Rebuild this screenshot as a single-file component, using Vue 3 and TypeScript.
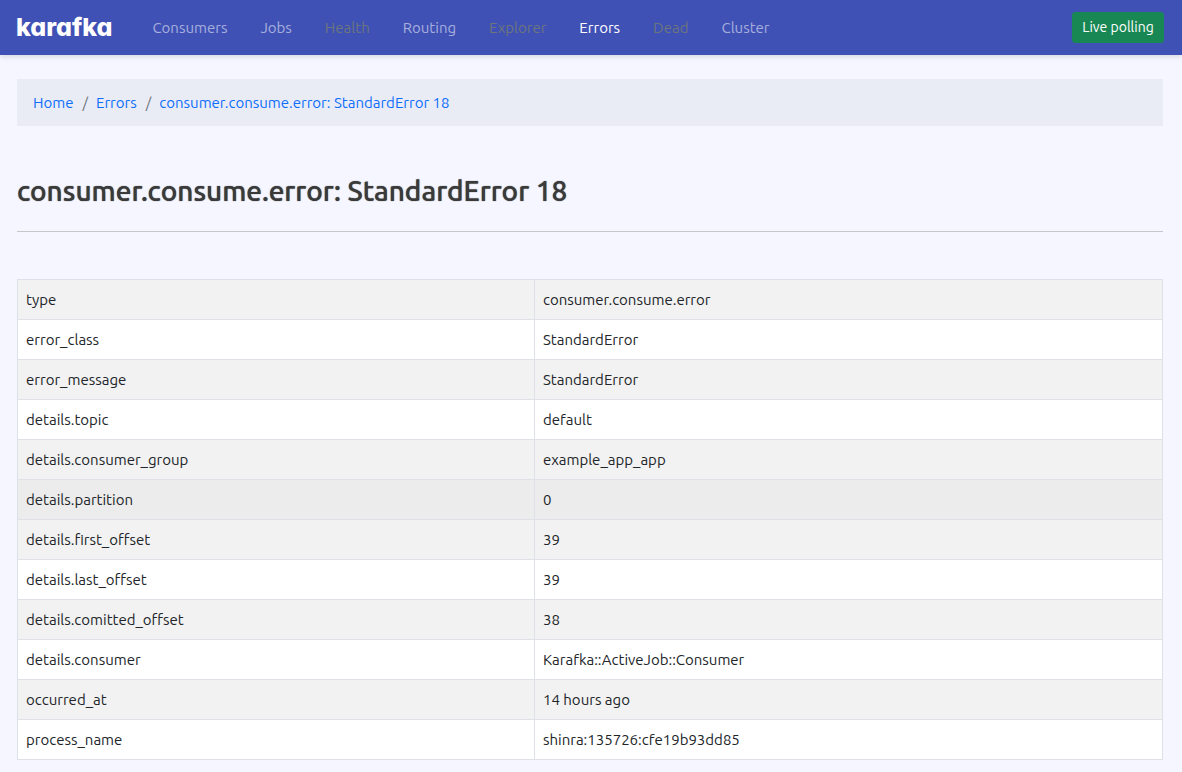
<script setup lang="ts">
interface NavItem {
  label: string
  state: 'normal' | 'disabled' | 'active'
}

interface DetailRow {
  name: string
  value: string
  highlighted?: boolean
}

const navItems: NavItem[] = [
  { label: 'Consumers', state: 'normal' },
  { label: 'Jobs', state: 'normal' },
  { label: 'Health', state: 'disabled' },
  { label: 'Routing', state: 'normal' },
  { label: 'Explorer', state: 'disabled' },
  { label: 'Errors', state: 'active' },
  { label: 'Dead', state: 'disabled' },
  { label: 'Cluster', state: 'normal' },
]

const title = 'consumer.consume.error: StandardError 18'
const breadcrumbs: string[] = ['Home', 'Errors', title]

const rows: DetailRow[] = [
  { name: 'type', value: 'consumer.consume.error' },
  { name: 'error_class', value: 'StandardError' },
  { name: 'error_message', value: 'StandardError' },
  { name: 'details.topic', value: 'default' },
  { name: 'details.consumer_group', value: 'example_app_app' },
  { name: 'details.partition', value: '0', highlighted: true },
  { name: 'details.first_offset', value: '39' },
  { name: 'details.last_offset', value: '39' },
  { name: 'details.comitted_offset', value: '38' },
  { name: 'details.consumer', value: 'Karafka::ActiveJob::Consumer' },
  { name: 'occurred_at', value: '14 hours ago' },
  { name: 'process_name', value: 'shinra:135726:cfe19b93dd85' },
]
</script>

<template>
  <div class="page">
    <header class="navbar">
      <a class="brand" href="#">karafka</a>
      <nav class="nav" aria-label="Main">
        <a
          v-for="item in navItems"
          :key="item.label"
          class="nav-link"
          :class="item.state"
          :aria-current="item.state === 'active' ? 'page' : undefined"
          :aria-disabled="item.state === 'disabled' ? 'true' : undefined"
          href="#"
        >{{ item.label }}</a>
      </nav>
      <button class="polling" type="button">Live polling</button>
    </header>

    <main class="content">
      <nav class="breadcrumb" aria-label="Breadcrumb">
        <ol class="crumbs">
          <li v-for="crumb in breadcrumbs" :key="crumb" class="crumb">
            <a href="#">{{ crumb }}</a>
          </li>
        </ol>
      </nav>

      <h1 class="title">{{ title }}</h1>
      <hr class="rule" />

      <table class="details">
        <colgroup>
          <col class="col-name" />
          <col />
        </colgroup>
        <tbody>
          <tr v-for="row in rows" :key="row.name" :class="{ highlighted: row.highlighted }">
            <td>{{ row.name }}</td>
            <td>{{ row.value }}</td>
          </tr>
        </tbody>
      </table>
    </main>
  </div>
</template>

<style>
body {
  margin: 0;
  background: #f5f6ff;
}
</style>

<style scoped>
.page {
  font-family: Ubuntu, 'Noto Sans', 'Open Sans', sans-serif;
  font-size: 15px;
  line-height: 23px;
  color: #212529;
}

.navbar {
  display: flex;
  align-items: center;
  min-height: 55px;
  padding: 0 18px 0 16px;
  background: #3f51b5;
  box-shadow: 0 2px 5px rgba(0, 0, 0, 0.12);
}

.brand {
  margin: 0 24px 2px 0;
  font-family: Inter, Lato, sans-serif;
  font-size: 25px;
  font-weight: 800;
  font-feature-settings: 'cv11';
  line-height: 32px;
  color: #fff;
  text-decoration: none;
}

.nav {
  display: flex;
  flex: 1;
  gap: 1px;
}

.nav-link {
  padding: 8px 16px;
  color: rgba(255, 255, 255, 0.55);
  text-decoration: none;
}

.nav-link.disabled {
  color: #6c757d;
}

.nav-link.active {
  color: #fff;
}

.polling {
  min-width: 92px;
  padding: 4px 8px;
  border: 1px solid #198754;
  border-radius: 3px;
  background: #198754;
  color: #fff;
  font-family: inherit;
  font-size: 14px;
  line-height: 21px;
}

.content {
  padding: 24px 19px 12px 17px;
}

.breadcrumb {
  padding: 12px 16px;
  background: #e9ecf4;
}

.crumbs {
  display: flex;
  flex-wrap: wrap;
  margin: 0;
  padding: 0;
  list-style: none;
}

.crumb a {
  color: #0d6efd;
  text-decoration: none;
}

.crumb + .crumb::before {
  content: '/';
  padding: 0 8px 0 9px;
  color: #6c757d;
}

.title {
  margin: 48px 0 23px;
  font-size: 28px;
  font-weight: 500;
  line-height: 34px;
  color: #3a3a3a;
  text-shadow: 0 0 1px #3a3a3a;
}

.rule {
  height: 1px;
  margin: 0 0 47px;
  border: 0;
  background: #c6c7cb;
}

.details {
  width: 100%;
  border-collapse: collapse;
  background: #fff;
}

.col-name {
  width: 45.15%;
}

.details td {
  padding: 8px;
  border: 1px solid #dee2e6;
}

.details tr:nth-child(odd) {
  background: #f2f2f2;
}

.details tr.highlighted {
  background: #ececec;
}
</style>
